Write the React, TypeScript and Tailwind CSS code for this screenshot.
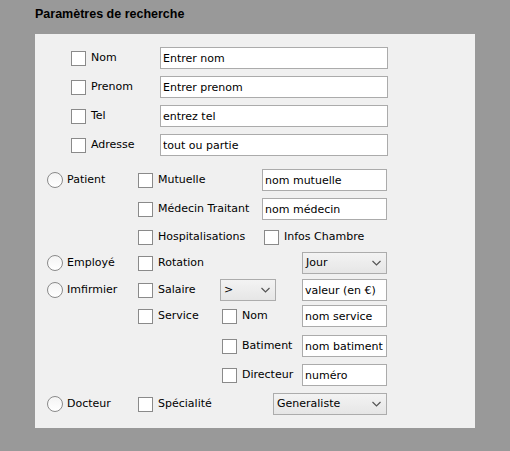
import React from "react";

const font = { fontFamily: '"DejaVu Sans", Tahoma, sans-serif' };

function Box() {
  return <span className="block w-[15px] h-[15px] shrink-0 border border-[#8a8a8a] bg-white" />;
}

function Radio() {
  return (
    <span className="block w-[16px] h-[16px] shrink-0 rounded-full border border-[#8a8a8a] bg-gradient-to-b from-[#f4f4f4] to-white" />
  );
}

function Check({ label, w }: { label: string; w: string }) {
  return (
    <div className={`flex items-center gap-[5px] shrink-0 ${w}`}>
      <Box />
      <span className="whitespace-nowrap">{label}</span>
    </div>
  );
}

function Rad({ label }: { label: string }) {
  return (
    <div className="flex items-center gap-[4px] shrink-0 w-[91px]">
      <Radio />
      <span className="whitespace-nowrap">{label}</span>
    </div>
  );
}

function Field({ value, w }: { value: string; w: string }) {
  return (
    <input
      readOnly
      defaultValue={value}
      style={font}
      className={`h-[22px] ${w} shrink-0 border border-[#ababab] bg-white pl-[2px] text-[11px] text-black outline-none`}
    />
  );
}

function Sel({ value, w }: { value: string; w: string }) {
  return (
    <div
      className={`h-[22px] ${w} shrink-0 flex items-center justify-between border border-[#acacac] bg-gradient-to-b from-[#f3f3f3] to-[#e6e6e6] pl-[3px] pr-[5px]`}
    >
      <span className="whitespace-nowrap">{value}</span>
      <svg width="9" height="6" viewBox="0 0 9 6">
        <polyline points="0.5,1 4.5,5 8.5,1" fill="none" stroke="#555" strokeWidth="1.2" />
      </svg>
    </div>
  );
}

function Row({ children, mt }: { children: React.ReactNode; mt: string }) {
  return <div className={`flex items-center h-[22px] ${mt}`}>{children}</div>;
}

export default function App() {
  return (
    <div className="w-[510px] h-[451px] bg-[#999999] text-[11px] text-black" style={font}>
      <div
        className="h-[34px] pl-[35px] pt-[7px] leading-[15px] font-bold text-[12.5px] text-black"
        style={{ fontFamily: '"Liberation Sans", Arial, sans-serif' }}
      >
        Paramètres de recherche
      </div>
      <div className="ml-[35px] w-[440px] h-[394px] bg-[#f0f0f0] pt-[13px]">
        <Row mt="mt-0">
          <div className="w-[36px] shrink-0" />
          <Check label="Nom" w="w-[89px]" />
          <Field value="Entrer nom" w="w-[228px]" />
        </Row>
        <Row mt="mt-[7px]">
          <div className="w-[36px] shrink-0" />
          <Check label="Prenom" w="w-[89px]" />
          <Field value="Entrer prenom" w="w-[228px]" />
        </Row>
        <Row mt="mt-[7px]">
          <div className="w-[36px] shrink-0" />
          <Check label="Tel" w="w-[89px]" />
          <Field value="entrez tel" w="w-[228px]" />
        </Row>
        <Row mt="mt-[7px]">
          <div className="w-[36px] shrink-0" />
          <Check label="Adresse" w="w-[89px]" />
          <Field value="tout ou partie" w="w-[228px]" />
        </Row>

        <Row mt="mt-[13px]">
          <div className="w-[12px] shrink-0" />
          <Rad label="Patient" />
          <Check label="Mutuelle" w="w-[124px]" />
          <Field value="nom mutuelle" w="w-[125px]" />
        </Row>
        <Row mt="mt-[7px]">
          <div className="w-[103px] shrink-0" />
          <Check label="Médecin Traitant" w="w-[124px]" />
          <Field value="nom médecin" w="w-[125px]" />
        </Row>
        <Row mt="mt-[6px]">
          <div className="w-[103px] shrink-0" />
          <Check label="Hospitalisations" w="w-[126px]" />
          <Check label="Infos Chambre" w="w-[120px]" />
        </Row>
        <Row mt="mt-[4px]">
          <div className="w-[12px] shrink-0" />
          <Rad label="Employé" />
          <Check label="Rotation" w="w-[164px]" />
          <Sel value="Jour" w="w-[85px]" />
        </Row>
        <Row mt="mt-[5px]">
          <div className="w-[12px] shrink-0" />
          <Rad label="Imfirmier" />
          <Check label="Salaire" w="w-[82px]" />
          <Sel value=">" w="w-[56px]" />
          <div className="w-[26px] shrink-0" />
          <Field value="valeur (en €)" w="w-[85px]" />
        </Row>
        <Row mt="mt-[4px]">
          <div className="w-[103px] shrink-0" />
          <Check label="Service" w="w-[84px]" />
          <Check label="Nom" w="w-[80px]" />
          <Field value="nom service" w="w-[85px]" />
        </Row>
        <Row mt="mt-[8px]">
          <div className="w-[187px] shrink-0" />
          <Check label="Batiment" w="w-[80px]" />
          <Field value="nom batiment" w="w-[85px]" />
        </Row>
        <Row mt="mt-[7px]">
          <div className="w-[187px] shrink-0" />
          <Check label="Directeur" w="w-[80px]" />
          <Field value="numéro" w="w-[85px]" />
        </Row>
        <Row mt="mt-[7px]">
          <div className="w-[12px] shrink-0" />
          <Rad label="Docteur" />
          <Check label="Spécialité" w="w-[135px]" />
          <Sel value="Generaliste" w="w-[114px]" />
        </Row>
      </div>
    </div>
  );
}
